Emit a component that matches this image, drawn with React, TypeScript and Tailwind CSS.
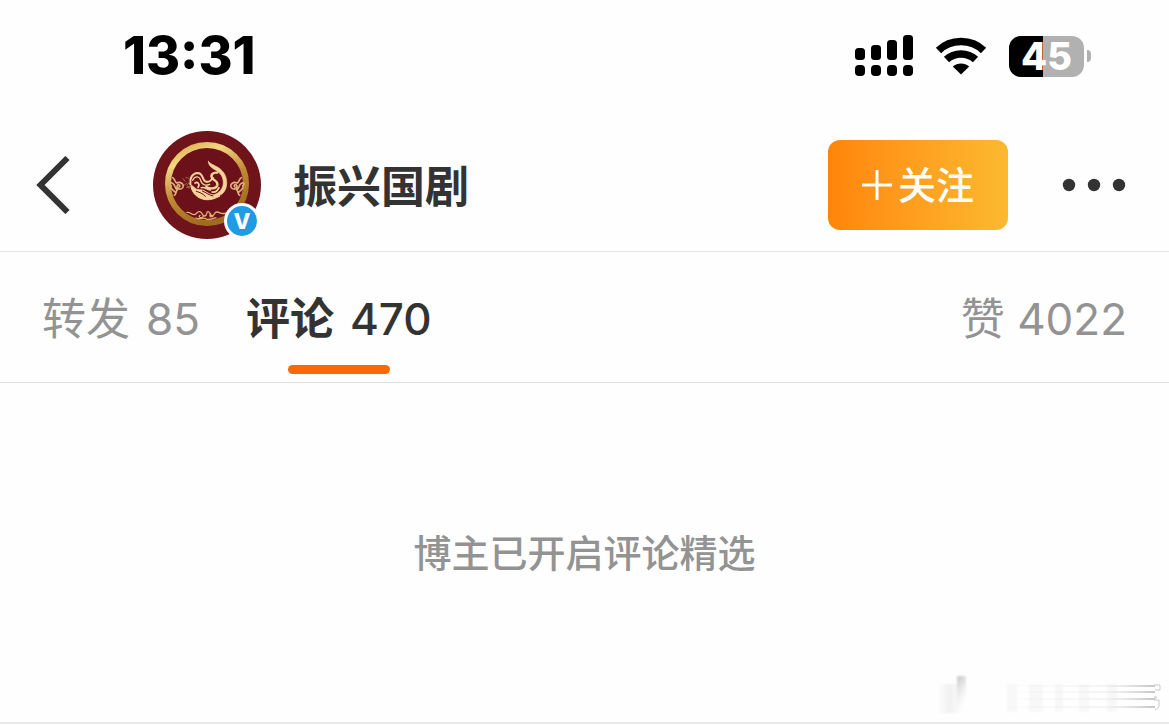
import React from "react";

const tabs = [
  { label: "转发", count: 85, active: false },
  { label: "评论", count: 470, active: true },
];

function SignalIcon() {
  return (
    <svg width="58" height="42" viewBox="0 0 58 42" fill="black" aria-hidden="true">
      <rect x="0" y="13" width="10" height="12" rx="3.5" />
      <rect x="16" y="10" width="10" height="15" rx="3.5" />
      <rect x="32" y="5" width="10" height="20" rx="3.5" />
      <rect x="48" y="0" width="10" height="25" rx="3.5" />
      <rect x="0" y="30" width="10" height="11" rx="4" />
      <rect x="16" y="30" width="10" height="11" rx="4" />
      <rect x="32" y="30" width="10" height="11" rx="4" />
      <rect x="48" y="30" width="10" height="11" rx="4" />
    </svg>
  );
}

function WifiIcon() {
  return (
    <svg width="52" height="38" viewBox="0 0 52 38" fill="none" stroke="black" aria-hidden="true">
      <path d="M3.500 13.500 C15.500 1.500 36.500 1.500 48.500 13.500" strokeWidth="7.500" />
      <path d="M11.500 22.500 C19.500 15 32.500 15 40.500 22.500" strokeWidth="7.500" />
      <path d="M26 37.500 L17.800 29.600 C22.300 25.400 29.700 25.400 34.200 29.600 Z" fill="black" stroke="none" />
    </svg>
  );
}

function Battery() {
  return (
    <div className="flex items-center gap-[3px]">
      <div className="flex h-[41px] w-[75px] items-center justify-center rounded-xl bg-linear-to-r from-black from-45% to-[#b1b1b1] to-45% text-[38px] leading-none font-extrabold text-white">
        45
      </div>
      <div className="h-3 w-1 rounded-r-full bg-[#b1b1b1]" />
    </div>
  );
}

function Avatar() {
  return (
    <div className="relative size-[108px]">
      <svg className="size-full" viewBox="24 18 324 324" fill="none" role="img" aria-label="振兴国剧">
        <defs>
          <linearGradient id="ring" x1="0" y1="0" x2="0.4" y2="1">
            <stop offset="0" stopColor="#d9a53f" />
            <stop offset="0.25" stopColor="#f3d683" />
            <stop offset="0.6" stopColor="#c08b35" />
            <stop offset="1" stopColor="#a26b22" />
          </linearGradient>
        </defs>
        <circle cx="186" cy="180" r="162" fill="#6f141b" />
        <circle cx="186" cy="177" r="117" fill="#6c1019" stroke="url(#ring)" strokeWidth="18" />

        {/* dragon */}
        <g stroke="#f5d39b" strokeLinecap="round" strokeLinejoin="round">
          <path d="M190 109 C197 120 218 122 231 137 C250 156 250 192 231 207 C220 215 205 216 192 212 C216 211 234 196 235 174 C235 153 224 142 210 134 C200 129 190 121 190 109 Z" fill="#f5d39b" strokeWidth="2" />
          <path d="M136 178 C134 157 143 145 158 144 C175 144 171 164 181 169 C190 173 199 167 203 158" strokeWidth="6" />
          <path d="M143 166 C150 151 164 153 168 169 C172 181 183 183 194 178" strokeWidth="4" />
          <path d="M217 143 C203 141 195 151 202 160 C209 169 220 168 217 181 C213 193 193 192 184 186" strokeWidth="7" />
          <path d="M137 180 C140 205 158 221 181 224 C199 226 213 219 225 213 C204 213 190 206 181 199 C169 191 155 199 147 187 Z" fill="#f5d39b" strokeWidth="3" />
          <path d="M150 174 C158 169 166 179 159 187 M169 188 C178 185 185 193 196 195 M201 201 C211 203 218 197 222 188" strokeWidth="5" />
          <path d="M154 199 C163 202 173 205 181 214 M172 198 C184 203 193 211 204 213" stroke="#6c1019" strokeWidth="3" />
        </g>
        <path d="M121 159 C133 153 138 171 129 177 C120 184 132 189 138 180 M113 160 L121 170 M124 187 L136 189 M117 181 L127 173" stroke="#a66d49" strokeWidth="3" />

        {/* clouds along the ring */}
        <g stroke="#dfb077" strokeWidth="5" strokeLinecap="round" fill="none">
          <path d="M83 158 C91 163 88 170 95 174 C106 168 121 179 112 189 C103 197 91 188 98 180 C103 177 107 184 102 186 M79 183 C71 177 77 170 84 176 C93 183 89 193 98 195 C91 197 95 208 88 211 M78 188 C83 197 87 198 92 202" />
          <path d="M289 158 C281 163 284 170 277 174 C266 168 251 179 260 189 C269 197 281 188 274 180 C269 177 265 184 270 186 M293 183 C301 177 295 170 288 176 C279 183 283 193 274 195 C281 197 277 208 284 211 M294 188 C289 197 285 198 280 202" />
          <path d="M126 262 C138 261 138 270 148 269 C157 269 153 259 164 260 C175 262 170 274 180 273 C187 272 183 260 189 260 C196 260 193 273 202 272 C211 271 206 260 217 261 C227 263 226 269 244 264 M153 279 C167 286 175 275 182 281 C190 287 203 281 213 278 M165 271 C158 276 168 282 174 275 M205 272 C198 279 191 274 197 267" strokeWidth="4" />
        </g>
      </svg>
      <span className="absolute right-px bottom-0 flex size-9 items-center justify-center rounded-full border-[3px] border-white bg-[#1f9be3] text-[22px] leading-none font-extrabold text-white">
        V
      </span>
    </div>
  );
}

function Watermark() {
  return (
    <svg className="absolute right-1 bottom-0 h-12 w-[232px]" viewBox="0 0 232 48" fill="none" aria-hidden="true">
      <defs>
        <linearGradient id="fade" x1="0" x2="1">
          <stop offset="0" stopColor="#cccccc" stopOpacity="0" />
          <stop offset="0.7" stopColor="#cccccc" stopOpacity="0.2" />
          <stop offset="1" stopColor="#b8b8b8" stopOpacity="0.8" />
        </linearGradient>
        <linearGradient id="stem" x1="0" y1="0" x2="0.3" y2="1">
          <stop offset="0" stopColor="#c4c4c4" />
          <stop offset="1" stopColor="#eeeeee" stopOpacity="0" />
        </linearGradient>
        <linearGradient id="block" x1="0" x2="1">
          <stop offset="0" stopColor="#eeeeee" stopOpacity="0" />
          <stop offset="0.5" stopColor="#ececec" />
          <stop offset="1" stopColor="#eeeeee" stopOpacity="0" />
        </linearGradient>
        <filter id="soft" x="-0.2" y="-0.2" width="1.4" height="1.4">
          <feGaussianBlur stdDeviation="1" />
        </filter>
      </defs>
      <g filter="url(#soft)">
        <rect x="4" y="10" width="26" height="29" fill="url(#block)" opacity="0.8" />
        <rect x="24" y="2" width="9" height="34" rx="2" fill="url(#stem)" />
        <g fill="#f8f8f8">
          <rect x="74" y="10" width="10" height="28" />
          <rect x="96" y="10" width="14" height="28" />
          <rect x="122" y="10" width="8" height="28" />
          <rect x="146" y="10" width="10" height="28" />
          <rect x="174" y="10" width="10" height="28" />
        </g>
      </g>
      <g fill="url(#fade)">
        <rect x="70" y="11" width="152" height="2" />
        <rect x="70" y="17" width="152" height="2" />
        <rect x="70" y="24" width="152" height="2" />
        <rect x="70" y="32" width="152" height="2" />
      </g>
      <path d="M221 11 h6 v5 h-5 M221 23 h3 l-3 3 M221 26 h5 v7 l-4 3" stroke="#c9c9c9" strokeWidth="1" />
    </svg>
  );
}

export default function App() {
  return (
    <div className="min-h-screen bg-[#fefefe] font-['Inter','Noto_Sans_CJK_SC',sans-serif] text-[#333333]">
      <div className="flex h-[118px] items-center justify-between pr-[78px] pb-1.5 pl-[123px] text-black">
        <span className="text-[52px] leading-none font-extrabold">13:31</span>
        <div className="flex items-center gap-[22px]">
          <SignalIcon />
          <WifiIcon />
          <Battery />
        </div>
      </div>

      <header className="flex h-[134px] items-center border-b border-[#e4e4e4] pr-[43px] pl-9">
        <button aria-label="返回">
          <svg width="34" height="58" viewBox="0 0 34 58" fill="none" stroke="#333333" strokeWidth="6">
            <path d="M31.500 2 L4.500 29 L31.500 56" />
          </svg>
        </button>
        <div className="ml-[83px] flex items-center gap-8">
          <Avatar />
          <h1 className="pt-1 text-[44px] leading-none font-bold">振兴国剧</h1>
        </div>
        <button className="ml-auto flex h-[90px] w-[180px] items-center justify-center gap-1.5 rounded-xl bg-linear-to-r from-[#ff8508] to-[#fcb930] text-[38px] leading-none font-medium text-white">
          <svg width="30" height="30" viewBox="0 0 30 30" stroke="white" strokeWidth="3" aria-hidden="true">
            <path d="M15 0 V30 M0 15 H30" />
          </svg>
          关注
        </button>
        <button aria-label="更多" className="ml-[54px]">
          <svg width="64" height="14" viewBox="0 0 64 14" fill="#333333">
            <circle cx="7" cy="7" r="6.200" />
            <circle cx="32" cy="7" r="6.200" />
            <circle cx="57" cy="7" r="6.200" />
          </svg>
        </button>
      </header>

      <nav className="flex h-[131px] items-stretch gap-[46px] border-b border-[#e0e0e0] px-[42px] pt-[3px] text-[44px] leading-none">
        {tabs.map((tab) => (
          <button
            key={tab.label}
            className={
              tab.active
                ? "relative flex items-center gap-4 font-medium"
                : "relative flex items-center gap-4 text-[#939393]"
            }
          >
            <span className={tab.active ? "font-bold" : ""}>{tab.label}</span>
            <span>{tab.count}</span>
            {tab.active && (
              <span className="absolute bottom-2 left-1/2 h-[9px] w-[102px] -translate-x-1/2 rounded-full bg-[#f96a06]" />
            )}
          </button>
        ))}
        <button className="ml-auto text-[#939393]">赞 4022</button>
      </nav>

      <main className="relative flex h-[341px] items-center justify-center border-b-2 border-[#e9e9e9]">
        <p className="text-[38px] leading-none font-medium text-[#939393]">博主已开启评论精选</p>
        <Watermark />
      </main>
    </div>
  );
}
